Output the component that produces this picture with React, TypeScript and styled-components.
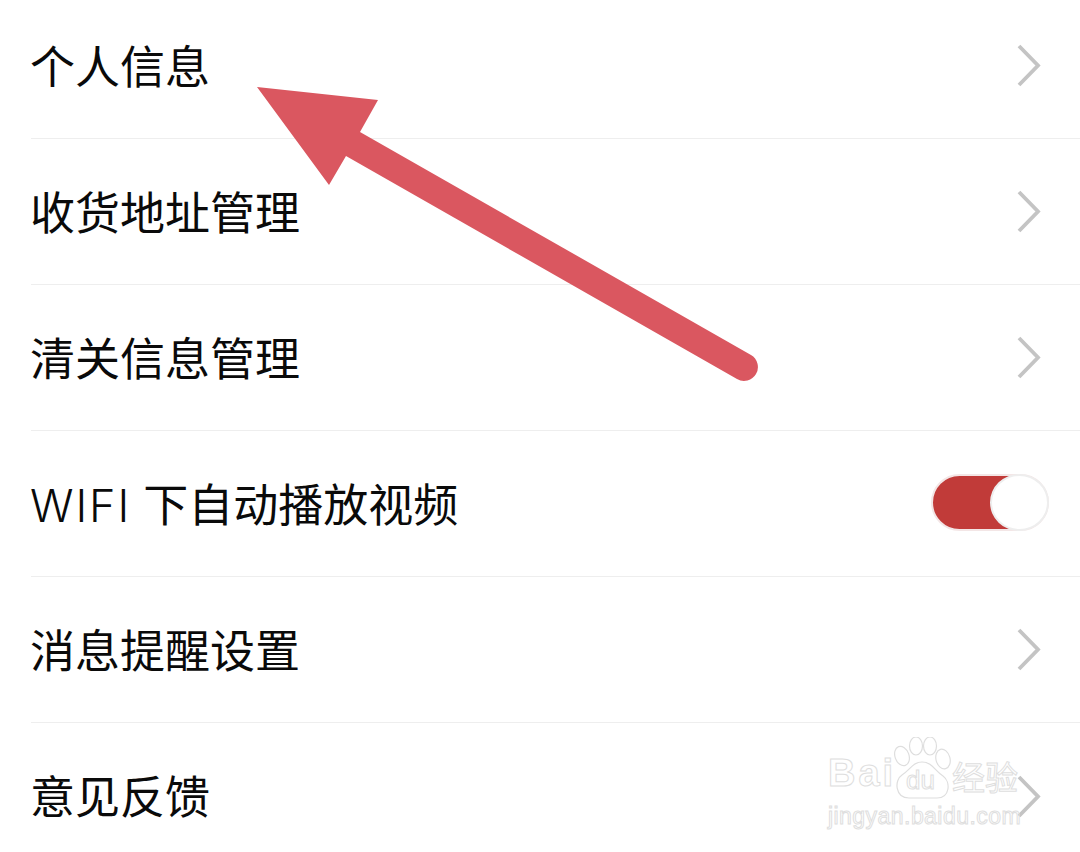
import React from "react";
import styled, { createGlobalStyle } from "styled-components";

const Global = createGlobalStyle`
  html, body { margin: 0; padding: 0; background: #fff; }
  body { font-family: "Noto Sans CJK SC", "Noto Sans", sans-serif; }
`;

const Page = styled.main`
  position: relative;
  width: 1080px;
  height: 852px;
  overflow: hidden;
  background: #fff;
`;

const List = styled.div`
  display: flex;
  flex-direction: column;
  padding-left: 31px;
  margin-top: -7px;
`;

const Row = styled.div`
  box-sizing: border-box;
  height: 146px;
  display: flex;
  align-items: center;
  justify-content: space-between;
  border-bottom: 1px solid #eeeeee;
  padding-right: 31px;
  &:last-child { border-bottom: none; }
`;

const Label = styled.span<{ $mixed?: boolean }>`
  font-size: 45px;
  line-height: 60px;
  color: #0a0a0a;
  margin-left: -1px;
  margin-top: ${(p) => (p.$mixed ? "2px" : "-2px")};
  white-space: nowrap;
`;

const WifiLatin = styled.span`
  font-family: "Inter", "Noto Sans", sans-serif;
  font-size: 45px;
  font-weight: 300;
  letter-spacing: 1.9px;
  margin-right: 2px;
`;

const ChevronIcon = styled.svg`
  width: 26px;
  height: 44px;
  margin-right: 7px;
  margin-top: 1px;
  flex: none;
`;

const Toggle = styled.div`
  box-sizing: border-box;
  position: relative;
  width: 118px;
  height: 57px;
  border-radius: 29px;
  background: linear-gradient(to right, #c13b39 0 75%, #fff 75%);
  border: 2px solid #f3e6e6;
  margin-top: -3px;
`;

const Knob = styled.div`
  box-sizing: border-box;
  position: absolute;
  right: -2px;
  top: -2px;
  width: 59px;
  height: 57px;
  border-radius: 50%;
  background: #fff;
  border: 2px solid #eeeeee;
`;

const ArrowLayer = styled.svg`
  position: absolute;
  left: 0;
  top: 0;
  width: 1080px;
  height: 852px;
  pointer-events: none;
`;

const Watermark = styled.div`
  position: absolute;
  left: 828px;
  top: 737px;
  width: 200px;
  height: 96px;
  color: transparent;
  -webkit-text-stroke: 1px #dedede;
  font-family: "Liberation Sans", sans-serif;
  white-space: nowrap;
`;

const MarkTop = styled.div`
  display: flex;
  align-items: flex-end;
  height: 63px;
`;

const MarkBai = styled.span`
  font-size: 38px;
  font-weight: 700;
  line-height: 38px;
  letter-spacing: 3px;
  width: 65px;
  margin-bottom: 8px;
`;

const PawSlot = styled.div`
  position: relative;
  width: 59px;
  height: 63px;
  flex: none;
`;

const PawIcon = styled.svg`
  width: 59px;
  height: 63px;
  display: block;
`;

const MarkDu = styled.span`
  position: absolute;
  left: 13px;
  bottom: 6px;
  font-size: 26px;
  line-height: 28px;
`;

const MarkCn = styled.span`
  font-family: "Noto Sans CJK SC", sans-serif;
  font-size: 33px;
  line-height: 38px;
  margin-bottom: 5px;
`;

const MarkUrl = styled.div`
  font-size: 23px;
  line-height: 26px;
  margin-top: 3px;
  letter-spacing: 0.45px;
`;

const Chevron = () => (
  <ChevronIcon viewBox="0 0 26 44" fill="none">
    <path d="M3 2 L22 21.5 L3 41" stroke="#c4c4c4" strokeWidth="3.8" />
  </ChevronIcon>
);

export default function App() {
  return (
    <Page>
      <Global />
      <List>
        <Row><Label>个人信息</Label><Chevron /></Row>
        <Row><Label>收货地址管理</Label><Chevron /></Row>
        <Row><Label>清关信息管理</Label><Chevron /></Row>
        <Row>
          <Label $mixed><WifiLatin>WIFI</WifiLatin> 下自动播放视频</Label>
          <Toggle><Knob /></Toggle>
        </Row>
        <Row><Label>消息提醒设置</Label><Chevron /></Row>
        <Row><Label>意见反馈</Label><Chevron /></Row>
      </List>
      <ArrowLayer viewBox="0 0 1080 852">
        <path
          d="M257 87 L378 100 L360 132 L751 355 A13.5 13.5 0 0 1 737 379 L346 156 L329 185 Z"
          fill="#da5760"
        />
      </ArrowLayer>
      <Watermark>
        <MarkTop>
          <MarkBai>Bai</MarkBai>
          <PawSlot>
            <PawIcon viewBox="0 0 59 63" fill="none" stroke="#dedede" strokeWidth="1.2">
              <ellipse cx="9" cy="19" rx="7" ry="10" transform="rotate(-20 9 19)" />
              <ellipse cx="23" cy="9" rx="6.5" ry="9" />
              <ellipse cx="37" cy="9" rx="6.5" ry="9" />
              <ellipse cx="50" cy="22" rx="7" ry="10" transform="rotate(-15 50 22)" />
              <path d="M29 25 C20 25 17 33 9 38 C1 43 2 61 16 61 L44 61 C57 61 58 45 50 39 C42 34 39 25 29 25 Z" />
            </PawIcon>
            <MarkDu>du</MarkDu>
          </PawSlot>
          <MarkCn>经验</MarkCn>
        </MarkTop>
        <MarkUrl>jingyan.baidu.com</MarkUrl>
      </Watermark>
    </Page>
  );
}
